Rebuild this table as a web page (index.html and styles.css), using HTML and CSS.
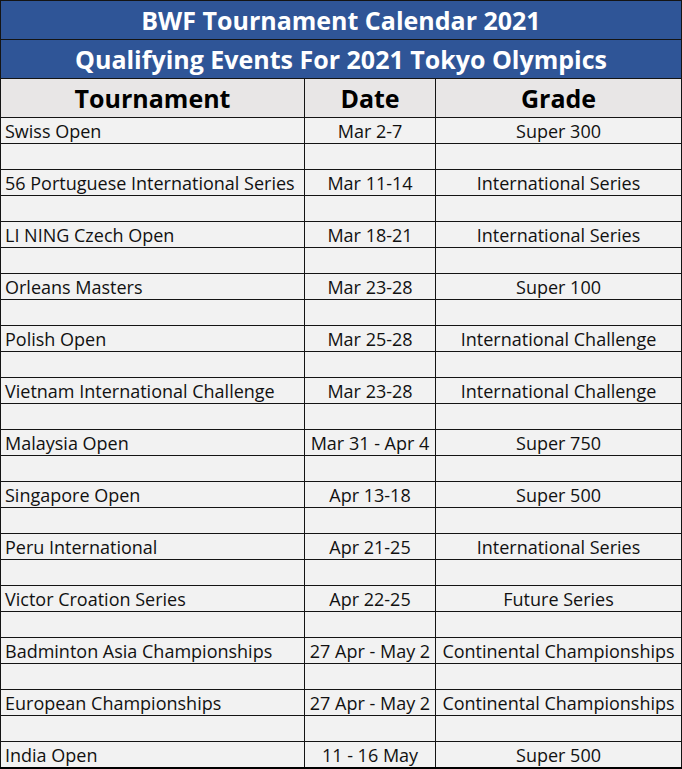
FILE: index.html
```html
<!DOCTYPE html>
<html>
<head>
<meta charset="utf-8">
<link rel="stylesheet" href="styles.css">
</head>
<body>
<table class="cal">
<colgroup><col class="c1"><col class="c2"><col class="c3"></colgroup>
<tr class="title"><td colspan="3">BWF Tournament Calendar 2021</td></tr>
<tr class="title"><td colspan="3">Qualifying Events For 2021 Tokyo Olympics</td></tr>
<tr class="head"><th>Tournament</th><th>Date</th><th>Grade</th></tr>
<tr><td class="name">Swiss Open</td><td>Mar 2-7</td><td>Super 300</td></tr>
<tr class="blank"><td></td><td></td><td></td></tr>
<tr><td class="name">56 Portuguese International Series</td><td>Mar 11-14</td><td>International Series</td></tr>
<tr class="blank"><td></td><td></td><td></td></tr>
<tr><td class="name">LI NING Czech Open</td><td>Mar 18-21</td><td>International Series</td></tr>
<tr class="blank"><td></td><td></td><td></td></tr>
<tr><td class="name">Orleans Masters</td><td>Mar 23-28</td><td>Super 100</td></tr>
<tr class="blank"><td></td><td></td><td></td></tr>
<tr><td class="name">Polish Open</td><td>Mar 25-28</td><td>International Challenge</td></tr>
<tr class="blank"><td></td><td></td><td></td></tr>
<tr><td class="name">Vietnam International Challenge</td><td>Mar 23-28</td><td>International Challenge</td></tr>
<tr class="blank"><td></td><td></td><td></td></tr>
<tr><td class="name">Malaysia Open</td><td>Mar 31 - Apr 4</td><td>Super 750</td></tr>
<tr class="blank"><td></td><td></td><td></td></tr>
<tr><td class="name">Singapore Open</td><td>Apr 13-18</td><td>Super 500</td></tr>
<tr class="blank"><td></td><td></td><td></td></tr>
<tr><td class="name">Peru International</td><td>Apr 21-25</td><td>International Series</td></tr>
<tr class="blank"><td></td><td></td><td></td></tr>
<tr><td class="name">Victor Croation Series</td><td>Apr 22-25</td><td>Future Series</td></tr>
<tr class="blank"><td></td><td></td><td></td></tr>
<tr><td class="name">Badminton Asia Championships</td><td>27 Apr - May 2</td><td>Continental Championships</td></tr>
<tr class="blank"><td></td><td></td><td></td></tr>
<tr><td class="name">European Championships</td><td>27 Apr - May 2</td><td>Continental Championships</td></tr>
<tr class="blank"><td></td><td></td><td></td></tr>
<tr class="last"><td class="name">India Open</td><td>11 - 16 May</td><td>Super 500</td></tr>
</table>
</body>
</html>
```
FILE: styles.css
```css
html, body {
  margin: 0;
  padding: 0;
  background: #ffffff;
}
.cal {
  border-collapse: collapse;
  table-layout: fixed;
  width: 681px;
  font-family: "Open Sans", Lato, sans-serif;
  color: #111;
}
.c1 { width: 304px; }
.c2 { width: 131px; }
.c3 { width: 246px; }
.cal td, .cal th {
  border: 1px solid #141414;
  padding: 1px 0 0 0;
  height: 24px;
  font-size: 18px;
  text-align: center;
  white-space: nowrap;
  overflow: hidden;
  background: #f2f2f2;
  line-height: 24px;
}
.cal td.name {
  text-align: left;
  padding-left: 4px;
}
.title td {
  background: #2f5597;
  color: #ffffff;
  font-weight: bold;
  font-size: 25px;
  padding: 0;
  height: 38px;
  line-height: 38px;
}
.head th {
  background: #e8e6e6;
  font-size: 25px;
  font-weight: bold;
  padding: 0;
  height: 38px;
  line-height: 38px;
  color: #000;
}
.last td {
  border-bottom: 2px solid #000;
}
```
